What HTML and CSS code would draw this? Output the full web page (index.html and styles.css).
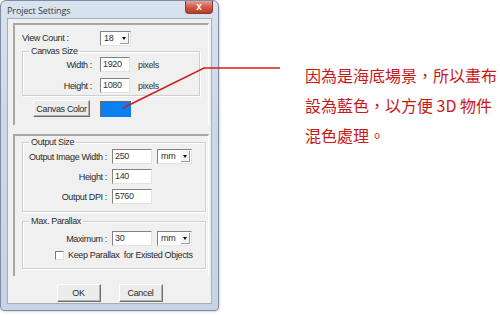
FILE: index.html
```html
<!doctype html>
<html lang="en">
  <head>
    <meta charset="UTF-8" />
    <title>Project Settings</title>
    <link rel="stylesheet" href="styles.css">
  </head>
  <body>
    <div class="window">
      <div class="titlebar">
        <span class="title">Project Settings</span>
        <span class="close">x</span>
      </div>

      <div class="client">
        <div class="panel panel-top">
          <div class="row view-row">
            <span class="label-view">View Count :</span>
            <span class="select select-count">18<span class="arrow"></span></span>
          </div>

          <fieldset class="group group-canvas">
            <legend>Canvas Size</legend>
            <div class="grid grid-canvas">
              <span class="label">Width :</span>
              <span class="input">1920</span>
              <span class="unit">pixels</span>
              <span class="label">Height :</span>
              <span class="input">1080</span>
              <span class="unit">pixels</span>
            </div>
          </fieldset>

          <div class="row color-row">
            <span class="btn btn-color">Canvas Color</span>
            <span class="swatch"></span>
          </div>
        </div>

        <div class="panel panel-bottom">
          <fieldset class="group group-output">
            <legend>Output Size</legend>
            <div class="grid grid-output">
              <span class="label">Output Image Width :</span>
              <span class="input">250</span>
              <span class="select select-unit">mm<span class="arrow"></span></span>
              <span class="label">Height :</span>
              <span class="input">140</span>
              <span></span>
              <span class="label">Output DPI :</span>
              <span class="input">5760</span>
              <span></span>
            </div>
          </fieldset>

          <fieldset class="group group-parallax">
            <legend>Max. Parallax</legend>
            <div class="grid grid-output">
              <span class="label">Maximum :</span>
              <span class="input">30</span>
              <span class="select select-unit">mm<span class="arrow"></span></span>
            </div>
            <div class="check-row">
              <span class="checkbox"></span>
              <span>Keep Parallax&nbsp; for Existed Objects</span>
            </div>
          </fieldset>
        </div>

        <div class="actions">
          <span class="btn btn-action">OK</span>
          <span class="btn btn-action">Cancel</span>
        </div>
      </div>
    </div>

    <div class="note">
      <p>因為是海底場景，所以畫布</p>
      <p>設為藍色，以方便 3D 物件</p>
      <p>混色處理。</p>
    </div>

    <!-- callout line from the colour swatch to the note -->
    <svg class="callout" width="500" height="315" viewBox="0 0 500 315">
      <polyline points="123,108 204,68 280,68" fill="none" stroke="#d21e1e" stroke-width="1.6" />
    </svg>
  </body>
</html>
```

FILE: styles.css
```css
* {
  margin: 0;
  padding: 0;
  box-sizing: border-box;
}

body {
  width: 500px;
  height: 315px;
  background: #ffffff;
  display: flex;
  align-items: flex-start;
  font-family: "Liberation Sans", Arial, sans-serif;
  font-size: 9px;
  letter-spacing: -0.35px;
  color: #2a2a2a;
  white-space: nowrap;
  position: relative;
  overflow: hidden;
}

/* window frame */

.window {
  width: 219px;
  height: 311px;
  border: 1px solid #7d8ca0;
  border-radius: 6px 6px 4px 4px;
  background: linear-gradient(180deg, #d9e3ef 0%, #cbd8e8 40%, #c6d4e6 100%);
  padding: 0 6px 6px;
  display: flex;
  flex-direction: column;
  box-shadow: 1px 1px 2px rgba(0, 0, 0, 0.15);
}

.titlebar {
  height: 17px;
  display: flex;
  align-items: flex-start;
  justify-content: space-between;
}

.title {
  font-family: "Open Sans", "Noto Sans", sans-serif;
  font-size: 9px;
  letter-spacing: -0.1px;
  color: #3a3a3a;
  padding-top: 3px;
}

.close {
  width: 28px;
  height: 13px;
  margin-right: -1px;
  border: 1px solid #8a3a30;
  border-top: none;
  border-radius: 0 0 4px 4px;
  background: linear-gradient(180deg, #e7a095 0%, #d05a48 50%, #bb3a28 100%);
  color: #ffffff;
  font-weight: 700;
  font-size: 10px;
  letter-spacing: 0;
  line-height: 11px;
  text-align: center;
}

.client {
  flex: 1;
  background: #f0f0f0;
  border: 1px solid #a3afbd;
  padding: 4px 2px 0 5px;
  display: flex;
  flex-direction: column;
}

/* sunken panels */

.panel {
  width: 196px;
  border-top: 2px solid #a8a8a8;
  border-left: 2px solid #a8a8a8;
  border-right: 1px solid #ffffff;
  padding: 0 0 0 7px;
}

.panel-top {
  height: 102px;
}

.panel-bottom {
  margin-top: 9px;
  height: 142px;
}

.row {
  display: flex;
  align-items: center;
}

.view-row {
  margin-top: 6px;
  height: 14px;
}

.label-view {
  width: 78px;
}

/* group boxes */

.group {
  margin: 0;
  border: 1px solid #cfcfcf;
  box-shadow: inset 1px 1px 0 #ffffff, 1px 1px 0 #ffffff;
  padding: 0 0 2px;
}

.group legend {
  margin-left: 6px;
  padding: 0 2px;
  line-height: 12px;
}

.group-canvas {
  width: 178px;
}

.group-output {
  width: 184px;
  padding-bottom: 7px;
}

.group-parallax {
  width: 184px;
  margin-top: 3px;
  padding-top: 3px;
  padding-bottom: 8px;
}

.grid {
  display: grid;
  align-items: center;
}

.grid-canvas {
  grid-template-columns: 69px 30px auto;
  column-gap: 8px;
  row-gap: 6px;
}

.grid-output {
  grid-template-columns: 84px 40px 35px;
  column-gap: 5px;
  row-gap: 5px;
  padding-top: 1px;
}

.label {
  text-align: right;
}

.input {
  height: 15px;
  background: #ffffff;
  border-top: 1px solid #828282;
  border-left: 1px solid #828282;
  border-right: 1px solid #e3e3e3;
  border-bottom: 1px solid #e3e3e3;
  padding-left: 2px;
  line-height: 13px;
  color: #333333;
}

.unit {
  color: #333333;
}

.select {
  height: 15px;
  background: #ffffff;
  border-top: 1px solid #828282;
  border-left: 1px solid #828282;
  border-right: 1px solid #e3e3e3;
  border-bottom: 1px solid #e3e3e3;
  padding-left: 3px;
  line-height: 13px;
  display: flex;
  justify-content: space-between;
  align-items: center;
}

.select-count {
  width: 31px;
}

.arrow {
  width: 9px;
  height: 11px;
  margin-right: 1px;
  background: #f4f4f4;
  border-right: 1px solid #9a9a9a;
  border-bottom: 1px solid #9a9a9a;
  position: relative;
}

.arrow::after {
  content: "";
  position: absolute;
  left: 2px;
  top: 4px;
  border-left: 2px solid transparent;
  border-right: 2px solid transparent;
  border-top: 3px solid #111111;
}

/* buttons */

.btn {
  display: flex;
  align-items: center;
  justify-content: center;
  background: #ececec;
  border-top: 1px solid #ffffff;
  border-left: 1px solid #ffffff;
  border-right: 1px solid #6e6e6e;
  border-bottom: 1px solid #6e6e6e;
  box-shadow: inset -1px -1px 0 #b4b4b4;
  color: #2a2a2a;
}

.color-row {
  margin-top: 4px;
}

.btn-color {
  width: 57px;
  height: 17px;
  margin-left: 11px;
}

.swatch {
  width: 31px;
  height: 16px;
  margin-left: 10px;
  background: #0a7ff2;
  border-top: 1px solid #6a6a6a;
  border-left: 1px solid #6a6a6a;
}

.check-row {
  margin-top: 4px;
  margin-left: 32px;
  display: flex;
  align-items: center;
  gap: 4px;
}

.checkbox {
  width: 9px;
  height: 9px;
  background: #ffffff;
  border-top: 1px solid #7a7a7a;
  border-left: 1px solid #7a7a7a;
  border-right: 1px solid #e0e0e0;
  border-bottom: 1px solid #e0e0e0;
}

.actions {
  margin-top: 8px;
  display: flex;
  justify-content: center;
  gap: 18px;
  padding-right: 3px;
}

.btn-action {
  width: 44px;
  height: 18px;
}

/* annotation */

.note {
  margin-left: 86px;
  padding-top: 60px;
  font-family: "Noto Sans CJK TC", "Noto Sans CJK SC", sans-serif;
  font-size: 16px;
  letter-spacing: 0;
  line-height: 30px;
  color: #c81818;
}

.callout {
  position: absolute;
  left: 0;
  top: 0;
  pointer-events: none;
}
```
